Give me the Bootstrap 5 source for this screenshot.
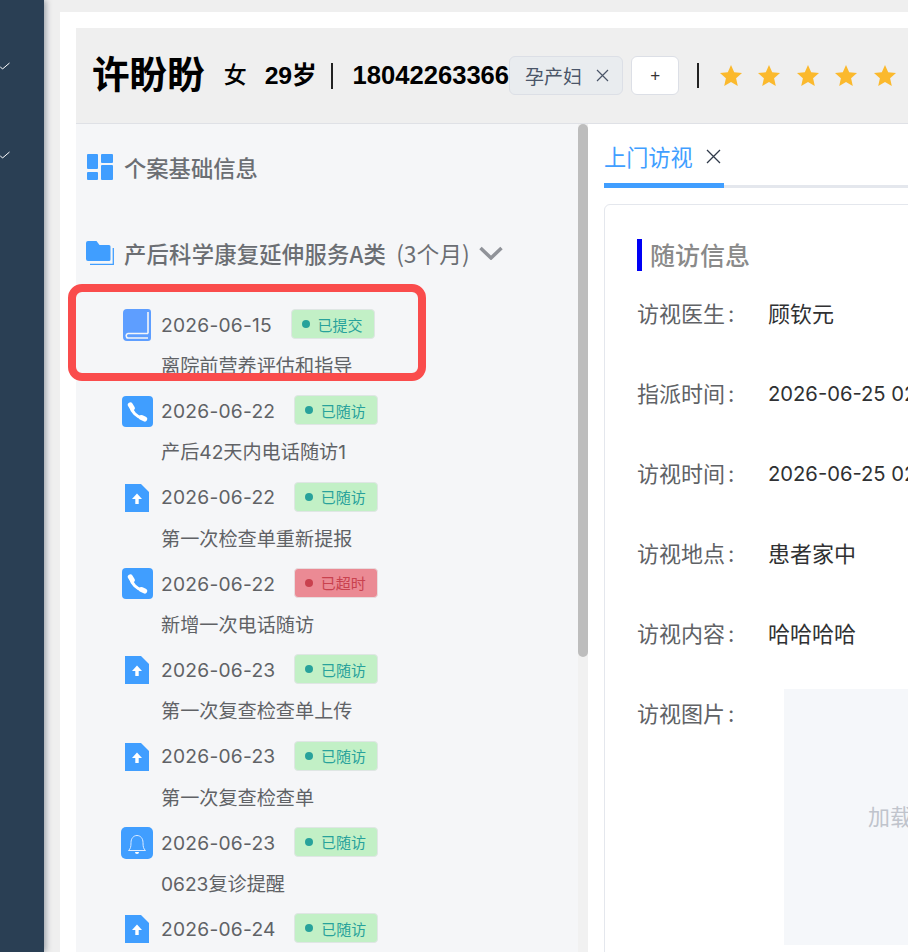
<!DOCTYPE html>
<html lang="zh-CN">
<head>
  <meta charset="UTF-8">
  <meta name="viewport" content="width=device-width, initial-scale=1">
  <title>个案详情</title>
  <link href="https://cdn.jsdelivr.net/npm/bootstrap@5.3.0/dist/css/bootstrap.min.css" rel="stylesheet">
  <style>
    html, body { height: 100%; overflow: hidden; }
    body {
      background: #efefef;
      font-family: "Inter", "Noto Sans CJK SC", sans-serif;
      color: #606266;
    }
    .app-shell { height: 952px; width: 908px; overflow: hidden; }
    .side-rail {
      width: 44px;
      flex: none;
      background: #2a3f54;
      box-shadow: 2px 0 6px rgba(0, 21, 41, .35);
      position: relative;
    }
    .side-check { position: absolute; left: 0; width: 10px; height: 8px; }
    .main-wrap { padding: 12px 0 0 16px; flex: 1; min-width: 0; }
    .white-panel { background: #fff; padding: 16px 0 0 16px; height: 100%; }

    .case-header {
      height: 96px;
      background: #efefef;
      border-bottom: 1px solid #dfe1e6;
      padding-left: 16px;
      color: #000;
      font-family: "Liberation Sans", "Noto Sans CJK SC", sans-serif;
      font-weight: 700;
      white-space: nowrap;
    }
    .case-name { font-size: 37.6px; margin-right: 19px; }
    .case-sex { font-size: 23px; font-weight: 500; margin-right: 18px; }
    .case-age { font-size: 24.8px; letter-spacing: -.2px; }
    .case-sep { width: 2px; height: 26px; background: #222; margin: 0 20px 0 14px; }
    .case-phone { font-size: 25.6px; }
    .tag-pill {
      height: 39px;
      width: 114px;
      flex: none;
      background: #e9ecef;
      border: 1px solid #dcdfe6;
      border-radius: 6px;
      font: 400 19px "Noto Sans CJK SC", sans-serif;
      color: #4a5568;
      padding-left: 15px;
    }
    .tag-pill svg { margin-left: 13px; }
    .add-btn {
      width: 48px;
      height: 39px;
      flex: none;
      background: #fff;
      border: 1px solid #dcdfe6;
      border-radius: 6px;
      font: 400 17px "Liberation Sans", sans-serif;
      color: #333;
      margin-left: 8px;
      padding: 0;
    }
    .star-sep { width: 2px; height: 25px; background: #222; flex: none; margin: 0 21px 0 18px; }
    .star-row { gap: 16.4px; flex: none; }

    .body-row { height: 828px; }
    .left-col { width: 502px; flex: none; background: #f5f6f8; }
    .scroll-track { width: 10px; flex: none; background: #f1f1f1; }
    .scroll-thumb { height: 533px; background: #bdbdbd; border-radius: 5px; }
    .right-col { flex: 1; min-width: 0; background: #fff; padding-left: 16px; overflow: hidden; }

    .menu-head {
      font: 500 22.3px "Noto Sans CJK SC", sans-serif;
      color: #6b6e73;
      white-space: nowrap;
    }
    .menu-head svg { flex: none; }
    .menu-first { height: 86px; padding-left: 11px; gap: 11px; }
    .menu-second { height: 88px; padding: 0 0 2px 10px; gap: 10px; letter-spacing: .25px; }
    .menu-second .months { font-weight: 400; font-size: 22.8px; margin-left: 10px; letter-spacing: 0; }
    .menu-second .chev { margin-left: -1px; }

    #visitList { padding-top: 6px; }
    .visit-item { height: 86.33px; padding-left: 45px; }
    .visit-top { height: 42px; }
    .visit-icon { width: 32px; flex: none; margin-right: 8px; }
    .visit-date { font-size: 19.2px; letter-spacing: .25px; color: #606266; }
    .visit-sub {
      height: 41px;
      padding-left: 40px;
      font: 400 19.15px/41px "Inter", "Noto Sans CJK SC", sans-serif;
      color: #606266;
    }
    .state-tag {
      height: 30px;
      width: 84px;
      margin: 0 0 2px 18.5px;
      padding-right: 1px;
      border-radius: 4px;
      border: 1px solid #dfe6e4;
      font: 400 15px "Noto Sans CJK SC", sans-serif;
    }
    .state-ok { background: #c2f0c6; color: #28a29b; }
    .state-late { background: #eb8a94; color: #c9414e; border-color: #e8dcde; }
    .state-dot { width: 8px; height: 8px; border-radius: 50%; background: currentColor; margin-right: 8px; }

    .highlight-box {
      position: absolute;
      left: 68px;
      top: 284px;
      width: 358px;
      height: 97px;
      border: 8px solid #fa4c4c;
      border-radius: 14px;
      pointer-events: none;
    }

    .tab-strip { height: 64px; width: 900px; border-bottom: 3px solid #e4e7ed; position: relative; }
    .tab-active {
      width: 120px;
      height: 64px;
      border-bottom: 5px solid #409eff;
      padding: 5px 0 0 0;
      margin-bottom: -3px;
      font: 400 22.2px "Noto Sans CJK SC", sans-serif;
      color: #409eff;
    }
    .tab-active svg { margin-left: 13px; }
    .info-card {
      margin-top: 16px;
      width: 900px;
      height: 760px;
      border: 1px solid #e4e7ed;
      border-radius: 6px;
      padding: 34px 0 0 32px;
      font-family: "Inter", "Noto Sans CJK SC", sans-serif;
      white-space: nowrap;
    }
    .info-title {
      height: 32px;
      border-left: 5px solid #0000f5;
      padding-left: 8px;
      font: 500 25px/30px "Noto Sans CJK SC", sans-serif;
      color: #8a8a8a;
      margin-bottom: 23px;
    }
    .info-line { height: 80px; line-height: 40px; font-size: 22px; }
    .info-label { width: 132px; flex: none; color: #606266; }
    .info-colon { margin-left: 3px; }
    .info-value { color: #303133; margin-left: -1px; }
    .info-time { font-size: 20.2px; }
    .photo-line { margin-top: -5px; }
    .photo-line .info-label { padding-top: 5px; }
    .photo-box {
      width: 256px;
      height: 256px;
      flex: none;
      margin-left: 15px;
      background: #f5f7fa;
      color: #c0c4cc;
    }
  </style>
</head>
<body>

<div class="app-shell d-flex position-relative">

  <!-- 左侧菜单 -->
  <div class="side-rail">
    <svg class="side-check" style="top:62px" viewBox="0 0 10 8" fill="none" stroke="#fff" stroke-width="1"><path d="M0 4.5 2.5 7 9.5 1"/></svg>
    <svg class="side-check" style="top:151px" viewBox="0 0 10 8" fill="none" stroke="#fff" stroke-width="1"><path d="M0 4.5 2.5 7 9.5 1"/></svg>
  </div>

  <div class="main-wrap">
    <div class="white-panel">

      <!-- 头部信息 -->
      <div class="case-header d-flex align-items-center">
        <span class="case-name">许盼盼</span>
        <span class="case-sex">女</span>
        <span class="case-age">29岁</span>
        <span class="case-sep"></span>
        <span class="case-phone">18042263366</span>
        <span class="tag-pill d-inline-flex align-items-center">孕产妇
          <svg width="15" height="15" viewBox="0 0 15 15" fill="none" stroke="#4a5568" stroke-width="1.2"><path d="M2 2l11 11M13 2 2 13"/></svg>
        </span>
        <button type="button" class="add-btn">+</button>
        <span class="star-sep"></span>
        <div class="star-row d-flex">
          <svg width="22" height="22" viewBox="0 0 22 22"><path fill="#fbb92d" d="M11 0l3.2 7.3 7.8.7-5.9 5.2L17.8 21 11 16.9 4.2 21l1.700-7.800L0 8l7.800-.7z"/></svg>
          <svg width="22" height="22" viewBox="0 0 22 22"><path fill="#fbb92d" d="M11 0l3.2 7.3 7.8.7-5.9 5.2L17.8 21 11 16.9 4.2 21l1.700-7.800L0 8l7.800-.7z"/></svg>
          <svg width="22" height="22" viewBox="0 0 22 22"><path fill="#fbb92d" d="M11 0l3.2 7.3 7.8.7-5.9 5.2L17.8 21 11 16.9 4.2 21l1.700-7.800L0 8l7.800-.7z"/></svg>
          <svg width="22" height="22" viewBox="0 0 22 22"><path fill="#fbb92d" d="M11 0l3.2 7.3 7.8.7-5.9 5.2L17.8 21 11 16.9 4.2 21l1.700-7.800L0 8l7.800-.7z"/></svg>
          <svg width="22" height="22" viewBox="0 0 22 22"><path fill="#fbb92d" d="M11 0l3.2 7.3 7.8.7-5.9 5.2L17.8 21 11 16.9 4.2 21l1.700-7.800L0 8l7.800-.7z"/></svg>
        </div>
      </div>

      <div class="body-row d-flex">

        <!-- 左边列表 -->
        <div class="left-col overflow-hidden">
          <div class="menu-head menu-first d-flex align-items-center">
            <svg width="26" height="26" viewBox="0 0 26 26" fill="#409eff"><rect width="11" height="15" rx="1"/><rect x="14" width="12" height="9" rx="1"/><rect y="18" width="11" height="8" rx="1"/><rect x="14" y="11" width="12" height="15" rx="1"/></svg>
            <span>个案基础信息</span>
          </div>
          <div class="menu-head menu-second d-flex align-items-center">
            <svg width="28" height="24" viewBox="0 0 28 24"><path fill="none" stroke="#409eff" stroke-width="1.300" d="M27.300 7v16.300H4"/><path fill="#409eff" d="M2 0h8.500l3 4H23a1.500 1.500 0 0 1 1.500 1.500V18.500A1.500 1.500 0 0 1 23 20H2a2 2 0 0 1-2-2V2a2 2 0 0 1 2-2z"/></svg>
            <span>产后科学康复延伸服务A类<span class="months">(3个月)</span></span>
            <svg class="chev" width="24" height="14" viewBox="0 0 24 14" fill="none" stroke="#909399" stroke-width="3.500"><path d="M1.500 2 12 12 22.500 2"/></svg>
          </div>

          <div id="visitList"></div>
        </div>

        <div class="scroll-track"><div class="scroll-thumb"></div></div>

        <!-- 右边详情 -->
        <div class="right-col">
          <div class="tab-strip">
            <div class="tab-active d-flex align-items-center">上门访视
              <svg width="15" height="15" viewBox="0 0 15 15" fill="none" stroke="#303a4a" stroke-width="1.300"><path d="M1 1l13 13M14 1 1 14"/></svg>
            </div>
          </div>
          <div class="info-card">
            <div class="info-title">随访信息</div>
            <div class="info-line d-flex"><span class="info-label">访视医生<span class="info-colon">:</span></span><span class="info-value">顾钦元</span></div>
            <div class="info-line d-flex"><span class="info-label">指派时间<span class="info-colon">:</span></span><span class="info-value info-time">2026-06-25 02:00:00</span></div>
            <div class="info-line d-flex"><span class="info-label">访视时间<span class="info-colon">:</span></span><span class="info-value info-time">2026-06-25 02:00:00</span></div>
            <div class="info-line d-flex"><span class="info-label">访视地点<span class="info-colon">:</span></span><span class="info-value">患者家中</span></div>
            <div class="info-line d-flex"><span class="info-label">访视内容<span class="info-colon">:</span></span><span class="info-value">哈哈哈哈</span></div>
            <div class="info-line photo-line d-flex">
              <span class="info-label">访视图片<span class="info-colon">:</span></span>
              <div class="photo-box d-flex align-items-center justify-content-center">加载失败</div>
            </div>
          </div>
        </div>

      </div>
    </div>
  </div>

  <div class="highlight-box"></div>
</div>

<script src="https://cdn.jsdelivr.net/npm/bootstrap@5.3.0/dist/js/bootstrap.bundle.min.js"></script>
<script>
const icons = {
  book: '<svg width="28" height="32" viewBox="0 0 28 32"><path fill="#5e9eff" d="M4 0h21a3 3 0 0 1 3 3v26a3 3 0 0 1-3 3H4a4 4 0 0 1-4-4V4a4 4 0 0 1 4-4z"/><path fill="none" stroke="#f5f6f8" stroke-width="1.600" d="M25 3v21.500M3.500 29h21.500M25 24.500H5a2.300 2.300 0 0 0 0 4.500"/></svg>',
  phone: '<svg width="31" height="31" viewBox="0 0 31 31"><rect width="31" height="31" rx="4" fill="#409eff"/><g fill="none" stroke="#fff" stroke-linecap="round"><path stroke-width="3" d="M8.500 10c1 5.500 6 11 12.500 12.500"/><path stroke-width="5" d="M8.300 8.800l2 3.200M19.500 21.500l3.200 1.600"/></g></svg>',
  file: '<svg width="24" height="28" viewBox="0 0 24 28"><path fill="#409eff" d="M0 0h16l8 8v20H0z"/><path fill="#fff" d="M12 9.500l5 5.500h-3.300v5h-3.400v-5H7z"/></svg>',
  bell: '<svg width="32" height="32" viewBox="0 0 32 32"><rect width="32" height="32" rx="5" fill="#409eff"/><path fill="none" stroke="#dcecff" stroke-width="1" d="M7.500 23.500c2-1.800 2.500-3.500 2.500-8 0-4 2.500-7 6-7s6 3 6 7c0 4.500.5 6.200 2.500 8z"/><path fill="#fff" d="M14 25h4a2 2 0 0 1-4 0z"/></svg>'
};

const visits = [
  { icon: 'book', date: '2026-06-15', state: '已提交', name: '离院前营养评估和指导' },
  { icon: 'phone', date: '2026-06-22', state: '已随访', name: '产后42天内电话随访1' },
  { icon: 'file', date: '2026-06-22', state: '已随访', name: '第一次检查单重新提报' },
  { icon: 'phone', date: '2026-06-22', state: '已超时', name: '新增一次电话随访' },
  { icon: 'file', date: '2026-06-23', state: '已随访', name: '第一次复查检查单上传' },
  { icon: 'file', date: '2026-06-23', state: '已随访', name: '第一次复查检查单' },
  { icon: 'bell', date: '2026-06-23', state: '已随访', name: '0623复诊提醒' },
  { icon: 'file', date: '2026-06-24', state: '已随访', name: '' }
];

const list = document.getElementById('visitList');
visits.forEach(v => {
  const stateClass = v.state === '已超时' ? 'state-late' : 'state-ok';
  list.innerHTML += `
    <div class="visit-item">
      <div class="visit-top d-flex align-items-center">
        <span class="visit-icon d-flex justify-content-center">${icons[v.icon]}</span>
        <span class="visit-date">${v.date}</span>
        <span class="state-tag ${stateClass} d-flex align-items-center justify-content-center">
          <i class="state-dot"></i>${v.state}
        </span>
      </div>
      <div class="visit-sub">${v.name}</div>
    </div>`;
});
</script>

</body>
</html>
